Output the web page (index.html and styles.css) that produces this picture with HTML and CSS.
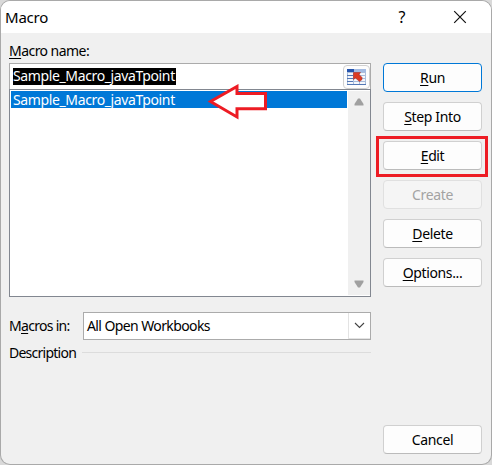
FILE: index.html
```html
<!DOCTYPE html>
<html lang="en">
<head>
<meta charset="utf-8">
<title>Macro</title>
<link rel="stylesheet" href="styles.css">
</head>
<body>
<div class="dialog">
  <header class="titlebar">
    <span class="title">Macro</span>
    <span class="help">?</span>
    <svg class="close" width="14" height="14" viewBox="0 0 14 14"><path d="M1.2 1.2 12.8 12.8M12.8 1.2 1.2 12.8" fill="none" stroke="#111" stroke-width="1.2"/></svg>
  </header>
  <main class="body">
    <section class="main-col">
      <div class="label"><span class="t-name"><u>M</u>acro name:</span></div>
      <div class="name-field">
        <span class="selected-text">Sample_Macro_javaTpoint</span>
        <span class="picker">
          <svg width="19" height="16" viewBox="0 0 19 16">
            <rect width="19" height="16" fill="#a9bddb"/>
            <path d="M0 0h19v3H0z" fill="#a3bbe3"/><path d="M0 0h7v3H0z" fill="#2554ad"/>
            <path d="M1 4h5v2H1zM7 4h5v2H7zM13 4h5v2h-5zM1 7h5v2H1zM13 7h5v2h-5zM1 10h5v2H1zM7 10h5v2H7zM13 10h5v2h-5zM1 13h5v2H1zM7 13h5v2H7zM13 13h5v2h-5z" fill="#f4f7fc"/>
            <path d="M0 15.5h19M0 6.500h6M0 9.500h6M0 12.500h6" stroke="#5377b5"/>
            <path d="M6.500 3.500h7l-1.500 2 3 3v2l-2.500 2-4-3.500-2 1.500z" fill="#dc3a22" stroke="#a82d25" stroke-width=".6"/>
          </svg>
        </span>
      </div>
      <div class="list">
        <div class="rows"><div class="row">Sample_Macro_javaTpoint</div></div>
        <div class="scroll">
          <svg width="10" height="8" viewBox="0 0 10 8"><path d="M4 .5h2L9.5 6v1.5h-9V6z" fill="#a0a0a0"/></svg>
          <svg width="10" height="8" viewBox="0 0 10 8"><path d="M.5.5h9V2L6 7.5H4L.5 2z" fill="#a0a0a0"/></svg>
        </div>
        <svg class="arrow" width="60" height="36" viewBox="0 0 60 36"><path d="M2.500 17.500 29 2.500v7h28.500v15.300H29V33z" fill="#fff" stroke="#ed1c24" stroke-width="3"/></svg>
      </div>
      <div class="scope">
        <span class="t-in">M<u>a</u>cros in:</span>
        <div class="select"><span class="t-all">All Open Workbooks</span>
          <span class="drop"><svg width="11" height="7" viewBox="0 0 11 7"><path d="M1 1l4.500 4.500L10 1" fill="none" stroke="#444" stroke-width="1.100"/></svg></span>
        </div>
      </div>
      <div class="desc"><span class="t-desc">Description</span><span class="rule"></span></div>
    </section>
    <aside class="buttons">
      <div class="btn primary"><span><u>R</u>un</span></div>
      <div class="btn"><span><u>S</u>tep Into</span></div>
      <div class="btn edit"><span><u>E</u>dit</span></div>
      <div class="btn disabled"><span>Create</span></div>
      <div class="btn"><span><u>D</u>elete</span></div>
      <div class="btn"><span><u>O</u>ptions...</span></div>
      <div class="btn cancel"><span>Cancel</span></div>
    </aside>
  </main>
</div>
</body>
</html>
```
FILE: styles.css
```css
* { box-sizing: border-box; }
body {
  margin: 0; height: 465px; padding: 1px; overflow: hidden;
  background: repeating-linear-gradient(#d9d9d9 0 22px, #a8a8a8 22px 23px, #d9d9d9 23px 25px);
  font: 14px/17px "Noto Sans", sans-serif; letter-spacing: -0.37px; color: #000;
}
svg { display: block; }
u { text-decoration-thickness: 1px; text-underline-offset: 2px; text-decoration-skip-ink: none; }
.dialog {
  height: 463px; display: flex; flex-direction: column; background: #f0f0f0;
  border-radius: 9px; overflow: hidden; box-shadow: 0 0 0 1px #a9a9a9;
}
.titlebar { height: 32px; flex: none; background: #fff; display: flex; align-items: center; padding: 0 24px 0 4px; }
.title { flex: 1; font-size: 15px; letter-spacing: -0.2px; }
.help { font-size: 16px; margin-right: 48px; }
.body { flex: 1; display: flex; gap: 12px; padding: 0 8px; }
.main-col { width: 362px; }
.label { height: 30px; padding-top: 9px; }
.t-name { letter-spacing: -0.55px; }
.t-in { letter-spacing: -0.7px; }
.t-all { letter-spacing: -0.6px; }
.t-desc { letter-spacing: -0.75px; }
.name-field {
  height: 26px; display: flex; align-items: center; justify-content: space-between;
  background: #fff; border: 1px solid #ababab; border-bottom: 0; padding: 0 0 0 3px;
}
.selected-text { height: 17px; line-height: 16px; background: #000; color: #fff; padding-right: 1px; }
.picker {
  width: 27px; height: 24px; display: flex; align-items: center; justify-content: center;
  background: #fdfdfd; border: 1px solid #d0d0d0; border-radius: 4px;
}
.list { position: relative; height: 208px; display: flex; border: 1px solid #828790; background: #fff; }
.rows { flex: 1; padding: 1px 0 0 1px; }
.row { height: 17px; background: #0078d7; color: #fff; padding-left: 2px; }
.scroll {
  width: 22px; margin: 1px 0 1px 1px; background: #f0f0f0;
  display: flex; flex-direction: column; align-items: center; justify-content: space-between; padding: 7px 0 7px;
}
.arrow { position: absolute; left: 198px; top: -6px; }
.scope { height: 28px; margin-top: 15px; display: flex; align-items: center; justify-content: space-between; }
.t-in, .t-all { position: relative; top: -1px; }
.select {
  width: 288px; height: 28px; display: flex; align-items: center; justify-content: space-between;
  background: #fff; border: 1px solid #ababab; padding-left: 3px;
}
.drop { width: 22px; height: 26px; display: flex; align-items: center; justify-content: center; border-left: 1px solid #e3e3e3; border-bottom: 1px solid #e3e3e3; }
.desc { display: flex; align-items: center; margin-top: 4px; height: 17px; }
.rule { height: 1px; background: #dcdcdc; width: 289px; margin-left: auto; }
.buttons { width: 99px; display: flex; flex-direction: column; gap: 10px; padding: 30px 0 10px; }
.btn {
  position: relative; height: 29px; flex: none; display: flex; align-items: center; justify-content: center;
  background: #fdfdfd; border: 1px solid #d0d0d0; border-bottom-color: #bbb; border-radius: 4px;
}
.primary { border-color: #0078d7; }
.disabled { background: #f5f5f5; border-color: #e0e0e0; color: #a3a3a3; }
.edit::after { content: ""; position: absolute; inset: -6px -7px -8px -8px; border: 3px solid #ed1c24; }
.cancel { margin-top: auto; }
```
